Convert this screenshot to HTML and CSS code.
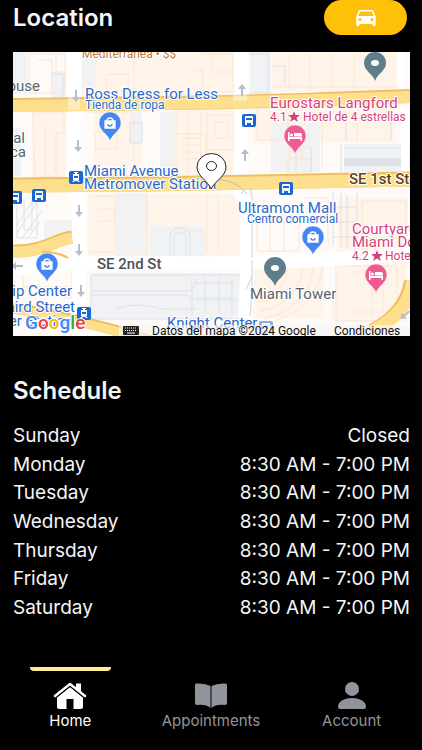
FILE: index.html
```
<!DOCTYPE html>
<html lang="en">
<head>
<meta charset="utf-8">
<meta name="viewport" content="width=device-width, initial-scale=1">
<title>Location and schedule</title>
<link rel="stylesheet" href="styles.css">
</head>
<body>
<main class="content">
  <section class="location">
    <header class="location-head">
      <h2>Location</h2>
      <button class="drive" type="button" aria-label="Get directions">
        <svg width="26" height="24" viewBox="0 0 24 24" preserveAspectRatio="none" aria-hidden="true"><path fill="currentColor" d="M18.9 5C18.7 4.400 18.100 4 17.500 4h-11c-.7 0-1.200.4-1.400 1L3 11v8c0 .6.400 1 1 1h1c.6 0 1-.4 1-1v-1h12v1c0 .6.400 1 1 1h1c.6 0 1-.4 1-1v-8zM6.500 15a1.500 1.500 0 1 1 0-3 1.500 1.500 0 0 1 0 3zm11 0a1.500 1.500 0 1 1 0-3 1.500 1.500 0 0 1 0 3zM5 10l1.500-4.500h11L19 10z"/></svg>
      </button>
    </header>
    <svg class="map" viewBox="13 52 397 284" role="img" aria-label="Map around Miami Avenue">
      <defs>
        <g id="pin"><path d="M0 18C-2 11-11 8-11 0a11 11 0 1 1 22 0C11 8 2 11 0 18z"/></g>
        <g id="bag" fill="none" stroke="#fff" stroke-width="1.300"><path d="M-5-2H5V5H-5z" fill="#fff"/><path d="M-3-2a3 3 0 0 1 6 0"/><path d="M-2 1a2 2 0 0 0 4 0" stroke="#4285f4"/></g>
        <g id="bed" fill="#fff"><path d="M-7-4h1.500v5H7v4H5.500V3h-11v2H-7z"/><circle cx="-3.500" cy="-1" r="1.500"/><path d="M-1-3h6q2 0 2 2v1.500h-8z"/></g>
        <g id="bus"><rect x="-7" y="-6" width="14" height="13" rx="2" fill="#1967d2"/><rect x="-4" y="-4" width="8" height="7" rx="1" fill="#fff"/><path d="M-3-2h6v2h-6z" fill="#1967d2"/><path d="M-4 3h2v2h-2zM2 3h2v2H2z" fill="#fff"/></g>
        <g id="tram"><rect x="-7" y="-6" width="14" height="13" rx="2" fill="#1967d2"/><path d="M-2-5h4v1H1v1h2v6H2l2 2H2L1 4h-2l-1 1h-2l2-2h-1v-6h2v-1h-1z" fill="#fff"/><path d="M-2-1h4v2h-4z" fill="#1967d2"/></g>
        <path id="arrow" d="M-1-6h2v7h3L0 6-4 1h3z" fill="#b9bccb"/>
        <path id="star" d="M0-6 1.500-2H6L2.500 1 4 5 0 2.500-4 5-2.500 1-6-2h4.500z"/>
      </defs>
      <rect x="13" y="52" width="397" height="284" fill="#fdfaf7"/>

      <!-- Building blocks -->
      <g fill="#fff4e9">
        <path d="M82 52h154v45H82zM272 52h128v40H272zM94 112h48v70H94zM174 108h63v68H174zM254 106h141v36H254zM88 194h160v64H88zM338 198h70v54h-70zM335 262h72v60h-72zM254 262h70v56h-70zM32 110h34v68H32z"/>
      </g>
      <g fill="#f1f2f4">
        <path d="M13 52h14v42H13zM51 71h15v27H51zM82 52h14v36H82zM250 52h21v42h-21zM271 123h49v49h-49zM344 144h66v29h-66zM130 112h12v30h-12zM160 112h14v64h-14zM116 193h32v65h-32zM13 128h8v48h-8zM91 273h150v46H91zM44 220h29v24H44zM149 226h56v31h-56z"/>
      </g>
      <path d="M344 158h66v8h-66z" fill="#dfe2e6"/>
      <g fill="none" stroke="#fce5d1" stroke-width="1">
        <path d="M29 54h36v39H29zM38 60h14v33M56 54v17M96 57h38v34M106 74h22v17h-22zM203 54h30v38h-30v-22h-9M212 54v18h21M289 54v36M310 54v37M332 54v35M354 54v35M272 87h126"/>
        <path d="M33 113h31v20h-7v44H35zM45 127v49M55 134v38M84 112h50v63H84M95 132h22v17H95zM176 110v64M188 112v62M201 112v61M176 134h30v40M182 138h18M182 145h18M182 152h18M182 159h18M207 115h27v35h-27zM215 122h13v16h-13zM257 108h30v32h-30zM289 112v60M322 111v58M357 110v32M291 150h10v8h-10zM302 147h10v12h-10zM287 160h25v12h-25z"/>
        <path d="M91 196h24v56H91M99 209h16v12H99M117 196h30v59h-30M207 194v58M218 194v57M184 231h20v16M257 221h27v30h-27zM270 216h29v35h-29zM302 198h26v46M362 201h44v37h-44zM336 266h61v55h-61zM351 272h32v40h-32M372 266v50"/>
        <path d="M260 311q41-7 43-48M264 319q46-11 50-56M258 302q28-8 30-40M275 321q43-15 48-57M315 296h18v23M23 265v22h50v-28M62 267h10v31H62"/>
      </g>
      <g fill="none" stroke="#dce0e8" stroke-width="1">
        <path d="M53 74h10v24M249 54h19v39h-19M273 66h12v17M130 123h12v20h-12zM346 112v28M391 115v25M341 144v29M344 148h66M311 172v-25M296 147v25"/>
        <path d="M17 205v33h20v-39M24 199v31h8v-31M17 233l20-30M17 225l16-25M22 238l20-27M28 238l12-17M170 257v-20q0-9 10-9t10 9v20M174 257v-18q0-6 6-6t6 6v18M91 275h149v44H91zM91 291h96q9 0 9-12M91 295h94q7 5 16 5h37M115 309q20-8 48 0h34M192 277v39M205 277v33M219 277v36M232 277v38M194 283h40M196 298h38M333 192v54M341 192v55M347 195v52M357 192v52M333 207h24M333 222h24M333 237h24"/>
      </g>

      <!-- Local streets -->
      <g fill="none" stroke="#fff">
        <path d="M74 52v120l5 30v134" stroke-width="14"/>
        <path d="M241 52v140q1 7 6 14v61l-2 69" stroke-width="14"/>
        <path d="M13 269Q70 261 170 263T410 254" stroke-width="14"/>
        <path d="M401 52v42M405 106v72" stroke-width="8"/>
      </g>
      <path d="M241 194q9-14 11 3v61M252 260v32l-2 24M246 290l6-14" fill="none" stroke="#ccd1db"/>

      <!-- Main avenues -->
      <g fill="none">
        <path d="M13 105 160 103Q260 102 410 96" stroke="#eebf61" stroke-width="14"/>
        <path d="M13 106 160 104Q260 102 410 97" stroke="#fddf8e" stroke-width="12"/>
        <path d="M13 185 145 184 410 179" stroke="#eebf61" stroke-width="15"/>
        <path d="M13 186 145 185 410 180" stroke="#fddf8e" stroke-width="13"/>
        <path d="M13 251C43 252 55 239 72 237" stroke="#eebf61" stroke-width="13"/>
        <path d="M13 252C43 253 55 240 72 238" stroke="#fddf8e" stroke-width="11"/>
        <path d="M13 308q70 11 142 34" stroke="#eebf61" stroke-width="11"/>
        <path d="M13 309q70 11 142 34" stroke="#fddf8e" stroke-width="9"/>
        <path d="M410 281q-5 32-39 49" stroke="#eebf61" stroke-width="12"/>
        <path d="M413 281q-5 32-39 49" stroke="#fddf8e" stroke-width="13"/>
        <path d="M42 252q17 0 26 6" stroke="#eebf61" stroke-width="2"/>
        <path d="M210 180q24-3 37 14" stroke="#b7bfd0"/>
      </g>
      <path d="M68 91h12v19H68zM233 88h14v13h-14z" fill="#fff" opacity=".4"/>

      <use href="#arrow" x="76" y="96"/><use href="#arrow" x="78" y="146"/><use href="#arrow" x="79" y="211"/><use href="#arrow" x="79" y="250"/><use href="#arrow" x="81" y="291"/>
      <use href="#arrow" transform="translate(242 90) rotate(180)"/><use href="#arrow" transform="translate(245 155) rotate(180)"/><use href="#arrow" transform="translate(17 266) rotate(90)"/><use href="#arrow" transform="translate(405 315) rotate(50)"/>

      <use href="#bus" x="249" y="120"/><use href="#bus" x="286" y="188"/><use href="#bus" x="39" y="195"/><use href="#bus" x="15" y="197"/><use href="#tram" x="76" y="177"/><use href="#tram" x="84" y="313"/><g opacity=".5"><use href="#bus" x="266" y="327"/></g>

      <!-- Place labels -->
      <g class="place category"><text x="82" y="58">Mediterránea • $$</text></g>
      <g class="place gray"><text x="40" y="91" text-anchor="end">house</text><text x="25" y="143" text-anchor="end">ical</text><text x="26" y="157" text-anchor="end">teca</text><text x="250" y="299">Miami Tower</text></g>
      <g class="place blue">
        <text x="85" y="99">Ross Dress for Less</text><text class="small" x="85" y="109">Tienda de ropa</text>
        <text x="84" y="176">Miami Avenue</text><text x="84" y="189">Metromover Station</text>
        <text x="238" y="213">Ultramont Mall</text><text class="small" x="247" y="223">Centro comercial</text>
        <text x="72" y="296" text-anchor="end">Ship Center</text><text x="75" y="312" text-anchor="end">Third Street</text><text x="73" y="326" text-anchor="end">mover Station</text><text x="167" y="328">Knight Center</text>
      </g>
      <g class="place pink">
        <text x="270" y="108">Eurostars Langford</text><text class="small" x="270" y="121">4.1</text><use href="#star" x="294" y="117"/><text class="small" x="303" y="121">Hotel de 4 estrellas</text>
        <text x="352" y="234">Courtyard</text><text x="352" y="247">Miami Downtown</text><text class="small" x="352" y="260">4.2</text><use href="#star" x="377" y="256"/><text class="small" x="385" y="260">Hotel</text>
      </g>
      <g class="place road"><text x="349" y="184">SE 1st St</text></g>
      <g class="place street"><text x="97" y="269">SE 2nd St</text></g>

      <!-- Place pins -->
      <g fill="#4285f4" stroke="#fff" stroke-width=".5"><use href="#pin" x="110" y="123"/><use href="#pin" x="47" y="264"/><use href="#pin" x="313" y="237"/></g>
      <use href="#bag" x="110" y="123"/><use href="#bag" x="47" y="264"/><use href="#bag" x="313" y="237"/>
      <g fill="#ec5b92" stroke="#fff" stroke-width=".5"><use href="#pin" x="295" y="136"/><use href="#pin" x="376" y="275"/></g>
      <use href="#bed" x="295" y="136"/><use href="#bed" x="376" y="275"/>
      <g fill="#607d8b"><use href="#pin" x="375" y="63"/><use href="#pin" x="275" y="268"/></g>
      <ellipse cx="375" cy="63" rx="4" ry="3" fill="#fff"/><ellipse cx="275" cy="268" rx="4" ry="3" fill="#fff"/>
      <path d="M211 189C208 181 197 176 197 167A14.500 13.500 0 0 1 226 167C226 176 215 181 211 189z" fill="#fff" stroke="#222"/>
      <ellipse cx="211.500" cy="166" rx="5" ry="4.500" fill="#fff" stroke="#222"/>

      <!-- Attribution -->
      <text class="brand" x="25" y="329"><tspan fill="#4285f4">G</tspan><tspan fill="#ea4335">o</tspan><tspan fill="#fbbc04">o</tspan><tspan fill="#4285f4">g</tspan><tspan fill="#34a853">l</tspan><tspan fill="#ea4335">e</tspan></text>
      <path d="M119 325h291v11H119z" fill="#f5f5f5" opacity=".7"/>
      <rect x="123" y="326" width="16" height="9" rx="1" fill="#222"/>
      <path d="M125 328h12M125 330.500h12" stroke="#fff" stroke-dasharray="1 1"/><path d="M127 333h8" stroke="#fff"/>
      <g class="legal"><text x="152" y="335">Datos del mapa ©2024 Google</text><text x="334" y="335">Condiciones</text></g>
    </svg>
  </section>

  <section class="schedule">
    <h2>Schedule</h2>
    <table class="hours">
      <tbody>
        <tr><th scope="row">Sunday</th><td>Closed</td></tr>
        <tr><th scope="row">Monday</th><td>8:30 AM - 7:00 PM</td></tr>
        <tr><th scope="row">Tuesday</th><td>8:30 AM - 7:00 PM</td></tr>
        <tr><th scope="row">Wednesday</th><td>8:30 AM - 7:00 PM</td></tr>
        <tr><th scope="row">Thursday</th><td>8:30 AM - 7:00 PM</td></tr>
        <tr><th scope="row">Friday</th><td>8:30 AM - 7:00 PM</td></tr>
        <tr><th scope="row">Saturday</th><td>8:30 AM - 7:00 PM</td></tr>
      </tbody>
    </table>
  </section>
</main>

<nav class="tabs" aria-label="Main">
  <a class="tab active" href="#home" aria-current="page">
    <svg width="34" height="28" viewBox="0 0 34 28" aria-hidden="true"><path fill="currentColor" d="M4 15.500 17 5l13 10.500V25q0 2-2 2h-7.500V17h-7v10H6q-2 0-2-2zM23 1.500h5V10l-5-4z"/><path d="M2 14 17 2l15 12" fill="none" stroke="currentColor" stroke-width="2.500" stroke-linecap="round" stroke-linejoin="round"/><path d="M4 15 17 4.500 30 15" fill="none" stroke="#000" stroke-width="1"/></svg>
    <span>Home</span>
  </a>
  <a class="tab" href="#appointments">
    <svg width="34" height="28" viewBox="0 0 34 28" aria-hidden="true"><path fill="currentColor" d="M16.500 4Q11 1 2.500 1.500 1 1.500 1 3v18q0 2 2 2 9-1 13.500 3zM17.500 4q5.500-3 14-2.500 1.500 0 1.500 1.500v18q0 2-2 2-9-1-13.500 3z"/></svg>
    <span>Appointments</span>
  </a>
  <a class="tab" href="#account">
    <svg width="34" height="28" viewBox="0 0 34 28" aria-hidden="true"><circle cx="17" cy="7" r="7" fill="currentColor"/><path fill="currentColor" d="M3 25c0-6 7-9 14-9s14 3 14 9q0 2-2 2H5q-2 0-2-2z"/></svg>
    <span>Account</span>
  </a>
</nav>
</body>
</html>
```
FILE: styles.css
```
* {
  box-sizing: border-box;
}

body {
  margin: 0;
  min-height: 100vh;
  display: flex;
  flex-direction: column;
  background: #000;
  color: #f4f5f8;
  font-family: Inter, "Liberation Sans", sans-serif;
}

.content {
  padding: 0 12px 0 13px;
}

h2 {
  margin: 0;
  font-size: 24px;
  line-height: 34px;
  font-weight: 600;
}

.location-head {
  display: flex;
  justify-content: space-between;
  align-items: center;
  padding-right: 3px;
  margin-bottom: 17px;
}

.drive {
  display: flex;
  align-items: center;
  justify-content: center;
  width: 83px;
  height: 35px;
  padding: 0;
  border: 0;
  border-radius: 18px;
  background: #ffc107;
  color: #fff;
}

.map {
  display: block;
  width: 100%;
  height: auto;
  font-family: Roboto, sans-serif;
}

.place {
  font-size: 15px;
  font-weight: 400;
  stroke: #fff;
  stroke-width: 2px;
  stroke-linejoin: round;
  paint-order: stroke;
}

.place .small {
  font-size: 12px;
}

.category {
  font-size: 12px;
  fill: #c77c35;
}

.gray {
  fill: #56646f;
}

.blue {
  fill: #2b69c9;
}

.pink {
  fill: #d63f7d;
}

.road {
  fill: #62430f;
  font-weight: 500;
}

.street {
  fill: #4d5156;
  font-weight: 500;
}

.brand {
  font-size: 19px;
  font-weight: 500;
  stroke: #fff;
  stroke-width: 2px;
  paint-order: stroke;
}

.legal {
  font-size: 12px;
  fill: #111;
}

.schedule {
  padding-top: 38px;
}

.hours {
  width: 100%;
  height: 200px;
  margin-top: 14px;
  border-collapse: collapse;
  font-size: 19px;
  line-height: 28px;
}

.hours th,
.hours td {
  padding: 0;
  font-weight: 400;
  text-align: left;
}

.hours td {
  text-align: right;
}

.tabs {
  display: flex;
  margin-top: auto;
}

.tab {
  flex: 1;
  display: flex;
  flex-direction: column;
  align-items: center;
  height: 83px;
  color: #92949c;
  font-size: 15px;
  line-height: 22px;
  text-decoration: none;
}

.tab::before {
  content: "";
  width: 81px;
  height: 4px;
  margin-bottom: 11px;
  border-radius: 0 0 4px 4px;
}

.tab.active {
  color: #fff;
}

.tab.active::before {
  background: #ffee93;
}
```
